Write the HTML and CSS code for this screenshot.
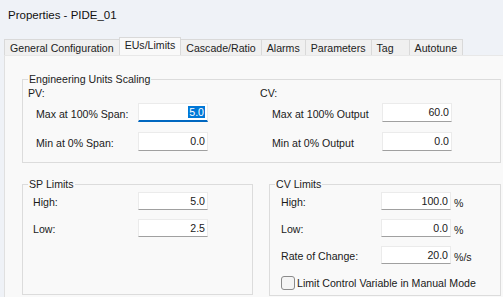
FILE: index.html
```html
<!DOCTYPE html>
<html lang="en">
<head>
    <meta charset="UTF-8">
    <title>Properties - PIDE_01</title>
    <link rel="stylesheet" href="styles.css">
</head>
<body>
    <div class="titlebar">Properties - PIDE_01</div>

    <div class="tabs">
        <div class="tab">General Configuration</div>
        <div class="tab active">EUs/Limits</div>
        <div class="tab">Cascade/Ratio</div>
        <div class="tab">Alarms</div>
        <div class="tab">Parameters</div>
        <div class="tab tab-tag">Tag</div>
        <div class="tab tab-auto">Autotune</div>
    </div>

    <div class="panel">
        <fieldset class="group scaling">
            <legend>Engineering Units Scaling</legend>
            <div class="cols">
                <div class="col pv">
                    <div class="sub">PV:</div>
                    <div class="rows">
                        <label>Max at 100% Span:</label>
                        <div class="field focused"><span class="sel">5.0</span></div>
                        <label>Min at 0% Span:</label>
                        <div class="field">0.0</div>
                    </div>
                </div>
                <div class="col cv">
                    <div class="sub">CV:</div>
                    <div class="rows">
                        <label>Max at 100% Output</label>
                        <div class="field">60.0</div>
                        <label>Min at 0% Output</label>
                        <div class="field">0.0</div>
                    </div>
                </div>
            </div>
        </fieldset>

        <div class="limits">
            <fieldset class="group sp-limits">
                <legend>SP Limits</legend>
                <div class="rows">
                    <label>High:</label>
                    <div class="field">5.0</div>
                    <label>Low:</label>
                    <div class="field">2.5</div>
                </div>
            </fieldset>

            <fieldset class="group cv-limits">
                <legend>CV Limits</legend>
                <div class="rows units">
                    <label>High:</label>
                    <div class="field">100.0</div>
                    <span class="unit">%</span>
                    <label>Low:</label>
                    <div class="field">0.0</div>
                    <span class="unit">%</span>
                    <label>Rate of Change:</label>
                    <div class="field">20.0</div>
                    <span class="unit">%/s</span>
                </div>
                <div class="check">
                    <span class="box"></span>
                    <span>Limit Control Variable in Manual Mode</span>
                </div>
            </fieldset>
        </div>
    </div>
</body>
</html>
```

FILE: styles.css
```css
body { margin: 0; background: #eff2f7; font-family: 'Liberation Sans', Arial, sans-serif; font-size: 10.6px; color: #1a1a1a; height: 297px; overflow: hidden; display: flex; flex-direction: column; }
.titlebar { height: 30px; line-height: 30px; padding-left: 8px; font-size: 11.5px; color: #111; }

.tabs { display: flex; align-items: flex-end; padding-left: 4px; margin-top: 7px; height: 18px; }
.tab { height: 16px; line-height: 16px; padding: 0 5px; background: #f0f0f0; border: 1px solid #d9d9d9; border-bottom: none; box-sizing: border-box; color: #222; margin-right: -1px; }
.tab.active { height: 18px; line-height: 15px; background: #f9f9f9; padding: 0 5px; position: relative; z-index: 1; }
.tab-tag { padding-right: 15px; }
.tab-auto { padding-left: 5px; }

.panel { flex: 1; margin-left: 4px; background: #f9f9f9; border-left: 1px solid #e0e0e0; border-top: 1px solid #e8e8e8; padding: 16px 2px 0 17px; }

.group { margin: 0; padding: 0; border: 1px solid #dcdcdc; min-width: 0; }
.group legend { padding: 0 1px; margin-left: 5px; line-height: 14px; color: #222; }

.cols { display: flex; padding-bottom: 11px; }
.col.pv { width: 232px; padding-left: 5px; }
.col.cv { flex: 1; }
.sub { line-height: 14px; }
.rows { display: grid; grid-template-columns: 102px 70px; row-gap: 10px; margin-top: 3px; padding-left: 8px; }
.col.cv .rows { grid-template-columns: 110px 70px; padding-left: 12px; }
.rows label { align-self: end; line-height: 16px; }

.field { height: 19px; box-sizing: border-box; background: #fff; border: 1px solid #ebebeb; border-bottom-color: #a0a0a0; text-align: right; padding-right: 2px; line-height: 17px; }
.field.focused { border-bottom: 2px solid #0067c0; }
.sel { background: #0078d7; color: #fff; padding: 0 1px; }

.limits { display: flex; gap: 16px; margin-top: 14px; flex: 1; }
.sp-limits { width: 231px; height: 118px; box-sizing: border-box; }
.cv-limits { flex: 1; height: 119px; box-sizing: border-box; }
.limits .rows { margin-top: 1px; row-gap: 9px; grid-template-columns: 105px 70px; padding-left: 10px; }
.limits .field { height: 18px; line-height: 16px; }
.cv-limits .rows.units { grid-template-columns: 100px 70px auto; padding-left: 11px; }
.unit { align-self: end; line-height: 14px; padding-left: 3px; }

.check { display: flex; align-items: center; gap: 2px; margin: 12px 0 0 11px; }
.box { width: 12px; height: 12px; border: 1px solid #8a8a8a; border-radius: 3px; background: #f4f4f4; }
```
